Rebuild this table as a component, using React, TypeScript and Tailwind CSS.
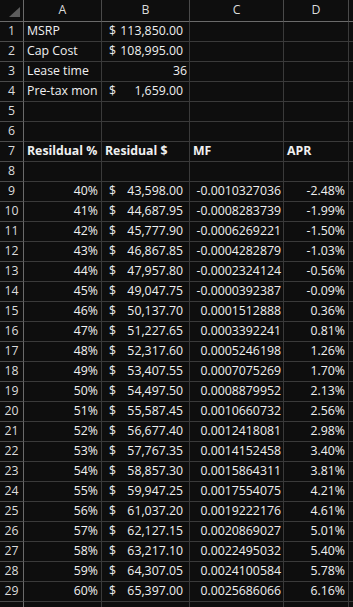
const font = { fontFamily: '"Open Sans", Lato, sans-serif' }

const rows: { pct: string; res: string; mf: string; apr: string }[] = [
    { pct: '40%', res: '43,598.00', mf: '-0.0010327036', apr: '-2.48%' },
    { pct: '41%', res: '44,687.95', mf: '-0.0008283739', apr: '-1.99%' },
    { pct: '42%', res: '45,777.90', mf: '-0.0006269221', apr: '-1.50%' },
    { pct: '43%', res: '46,867.85', mf: '-0.0004282879', apr: '-1.03%' },
    { pct: '44%', res: '47,957.80', mf: '-0.0002324124', apr: '-0.56%' },
    { pct: '45%', res: '49,047.75', mf: '-0.0000392387', apr: '-0.09%' },
    { pct: '46%', res: '50,137.70', mf: '0.0001512888', apr: '0.36%' },
    { pct: '47%', res: '51,227.65', mf: '0.0003392241', apr: '0.81%' },
    { pct: '48%', res: '52,317.60', mf: '0.0005246198', apr: '1.26%' },
    { pct: '49%', res: '53,407.55', mf: '0.0007075269', apr: '1.70%' },
    { pct: '50%', res: '54,497.50', mf: '0.0008879952', apr: '2.13%' },
    { pct: '51%', res: '55,587.45', mf: '0.0010660732', apr: '2.56%' },
    { pct: '52%', res: '56,677.40', mf: '0.0012418081', apr: '2.98%' },
    { pct: '53%', res: '57,767.35', mf: '0.0014152458', apr: '3.40%' },
    { pct: '54%', res: '58,857.30', mf: '0.0015864311', apr: '3.81%' },
    { pct: '55%', res: '59,947.25', mf: '0.0017554075', apr: '4.21%' },
    { pct: '56%', res: '61,037.20', mf: '0.0019222176', apr: '4.61%' },
    { pct: '57%', res: '62,127.15', mf: '0.0020869027', apr: '5.01%' },
    { pct: '58%', res: '63,217.10', mf: '0.0022495032', apr: '5.40%' },
    { pct: '59%', res: '64,307.05', mf: '0.0024100584', apr: '5.78%' },
    { pct: '60%', res: '65,397.00', mf: '0.0025686066', apr: '6.16%' },
]

// accounting format: $ on the left, number on the right with room for ")"
function Money({ value }: { value: string }) {
    return (
        <div className="flex h-full items-center justify-between pl-[7px] pr-[6px]">
            <span>$</span>
            <span>{value}</span>
        </div>
    )
}

function Row({ n, a, b, c, d }: { n?: number; a?: React.ReactNode; b?: React.ReactNode; c?: React.ReactNode; d?: React.ReactNode }) {
    return (
        <div className="flex h-[20px] text-[12.3px] text-[#f0f0f0]">
            <div className="flex w-[24px] shrink-0 items-center justify-center border-r border-b border-r-[#6a6a6a] border-b-[#4a4a4a] text-[#dcdcdc]">{n}</div>
            <div className="w-[78px] shrink-0 overflow-hidden whitespace-nowrap border-r border-b border-[#3a3a3a]">{a}</div>
            <div className="w-[88px] shrink-0 overflow-hidden whitespace-nowrap border-r border-b border-[#3a3a3a]">{b}</div>
            <div className="w-[94px] shrink-0 overflow-hidden whitespace-nowrap border-r border-b border-[#3a3a3a]">{c}</div>
            <div className="w-[65px] shrink-0 overflow-hidden whitespace-nowrap border-r border-b border-[#3a3a3a]">{d}</div>
            <div className="flex-1 border-b border-[#3a3a3a]" />
        </div>
    )
}

const left = (t: string, bold = false) => (
    <div className={`flex h-full items-center pl-[3px] ${bold ? 'font-bold' : ''}`}>{t}</div>
)
const right = (t: string, pr = 'pr-[2px]') => (
    <div className={`flex h-full items-center justify-end ${pr}`}>{t}</div>
)

export default function App() {
    return (
        <div className="h-[607px] w-[353px] overflow-hidden bg-[#0e0e0e]" style={font}>
            <div className="flex h-[22px] text-[12.3px] text-[#dcdcdc]">
                <div className="relative w-[24px] shrink-0 border-r border-b border-[#6a6a6a]">
                    <svg className="absolute left-0 top-0" width="23" height="21" viewBox="0 0 23 21">
                        <polygon points="9,17 20,17 20,7" fill="#5c5c5c" />
                    </svg>
                </div>
                {[['A', 'w-[78px]'], ['B', 'w-[88px]'], ['C', 'w-[94px]'], ['D', 'w-[65px]']].map(([l, w]) => (
                    <div key={l} className={`${w} flex shrink-0 items-center justify-center border-r border-b border-r-[#4a4a4a] border-b-[#6a6a6a]`}>{l}</div>
                ))}
                <div className="flex-1 border-b border-[#6a6a6a]" />
            </div>

            <Row n={1} a={left('MSRP')} b={<Money value="113,850.00" />} />
            <Row n={2} a={left('Cap Cost')} b={<Money value="108,995.00" />} />
            <Row n={3} a={left('Lease time')} b={right('36', 'pr-[2px]')} />
            <Row n={4} a={left('Pre-tax mon')} b={<Money value="1,659.00" />} />
            <Row n={5} />
            <Row n={6} />
            <Row n={7} a={left('Resildual %', true)} b={left('Residual $', true)} c={left('MF', true)} d={left('APR', true)} />
            <Row n={8} />
            {rows.map((r, i) => (
                <Row
                    key={r.pct}
                    n={i + 9}
                    a={right(r.pct, 'pr-[3px]')}
                    b={<Money value={r.res} />}
                    c={right(r.mf)}
                    d={right(r.apr, 'pr-[3px]')}
                />
            ))}
            <Row />
        </div>
    )
}
